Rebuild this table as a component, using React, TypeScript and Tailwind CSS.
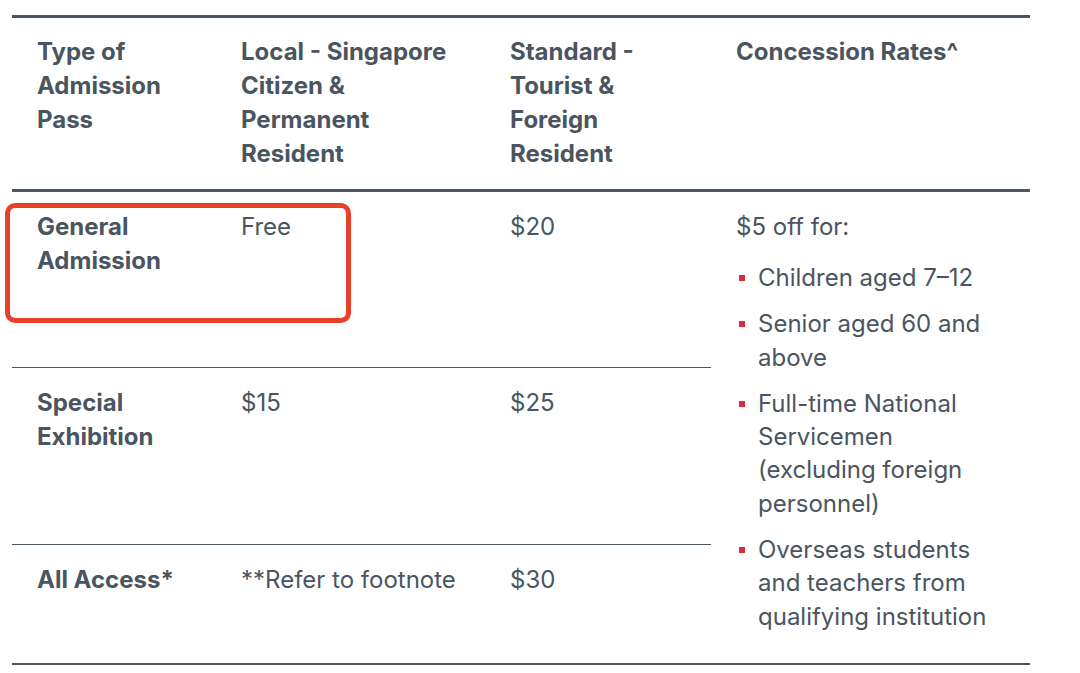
import React from "react";

const Bullet = ({ children }: { children: React.ReactNode }) => (
  <li className="relative pl-[22px]">
    <span className="absolute left-[3px] top-[14px] h-[6px] w-[6px] bg-[#d32f3c]" />
    {children}
  </li>
);

export default function App() {
  return (
    <div
      className="relative h-[673px] w-[1080px] overflow-hidden bg-white text-[24px] leading-[34px] text-[#4a5560]"
      style={{ fontFamily: "Inter, 'Noto Sans', sans-serif" }}
    >
      <div className="pt-[15px] pl-[12px]">
        <div className="w-[1018px] border-t-[3px] border-[#4b5661]">
          <div className="grid grid-cols-[204px_269px_226px_319px] border-b-[3px] border-[#4b5661] font-bold">
            <div className="pl-[25px] pr-[20px] pt-[17px] pb-[18px]">Type of Admission Pass</div>
            <div className="pl-[25px] pr-[20px] pt-[17px] pb-[18px]">Local - Singapore Citizen &amp; Permanent Resident</div>
            <div className="pl-[25px] pr-[16px] pt-[17px] pb-[18px]">Standard - Tourist &amp; Foreign Resident</div>
            <div className="pl-[25px] pr-[20px] pt-[17px] pb-[18px]">Concession Rates^</div>
          </div>
          <div className="grid grid-cols-[204px_269px_226px_319px] grid-rows-[176px_177px_118px] border-b-[2px] border-[#4b5661]">
            <div className="col-span-3 grid grid-cols-[204px_269px_226px] border-b border-[#4b5661]">
              <div className="pl-[25px] pt-[18px] font-bold">General Admission</div>
              <div className="pl-[25px] pt-[18px]">Free</div>
              <div className="pl-[25px] pt-[18px]">$20</div>
            </div>
            <div className="row-span-3 pl-[25px] pr-[36px] pt-[18px]">
              <p>$5 off for:</p>
              <ul className="mt-[17px] flex flex-col gap-[13px] leading-[33.3px]">
                <Bullet>Children aged 7–12</Bullet>
                <Bullet>Senior aged 60 and above</Bullet>
                <Bullet>Full-time National Servicemen (excluding foreign personnel)</Bullet>
                <Bullet>Overseas students and teachers from qualifying institution</Bullet>
              </ul>
            </div>
            <div className="col-span-3 grid grid-cols-[204px_269px_226px] border-b border-[#4b5661]">
              <div className="pl-[25px] pt-[18px] font-bold">Special Exhibition</div>
              <div className="pl-[25px] pt-[18px]">$15</div>
              <div className="pl-[25px] pt-[18px]">$25</div>
            </div>
            <div className="col-span-3 grid grid-cols-[204px_269px_226px]">
              <div className="pl-[25px] pt-[18px] font-bold">All Access*</div>
              <div className="pl-[25px] pt-[18px]">**Refer to footnote</div>
              <div className="pl-[25px] pt-[18px]">$30</div>
            </div>
          </div>
        </div>
      </div>
      <div className="absolute left-[5px] top-[203px] h-[120px] w-[346px] rounded-[10px] border-[5px] border-[#e8402a]" />
    </div>
  );
}
